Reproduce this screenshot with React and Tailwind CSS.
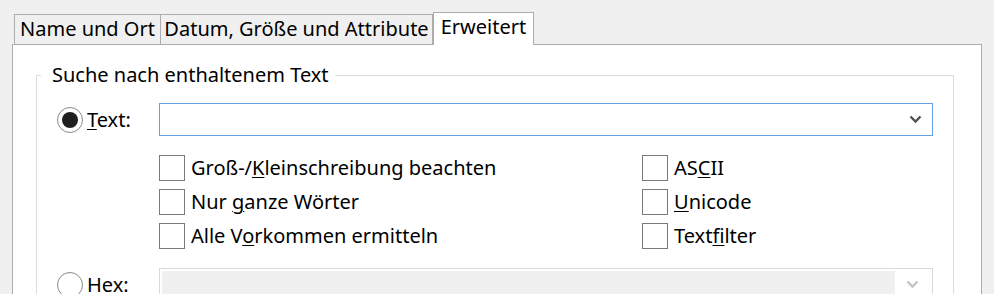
import React from "react";

function Radio({ checked }) {
  return (
    <span className="w-[26px] h-[26px] shrink-0 rounded-full border border-[#8a8a8a] bg-white flex items-center justify-center">
      {checked && <span className="w-[16px] h-[16px] rounded-full bg-[#1f1f1f]" />}
    </span>
  );
}

function Check({ children }) {
  return (
    <div className="flex items-center h-[26px] gap-[6px]">
      <span className="w-[26px] h-[26px] shrink-0 border border-[#7a7a7a] bg-white" />
      <span className="leading-[26px] whitespace-nowrap">{children}</span>
    </div>
  );
}

function U({ children }) {
  return <span className="underline underline-offset-[2px] decoration-1">{children}</span>;
}

function Chevron({ color }) {
  return (
    <svg width="13" height="9" viewBox="0 0 13 9">
      <polyline points="1.5,1.5 6.5,6.5 11.5,1.5" fill="none" stroke={color} strokeWidth="2.4" />
    </svg>
  );
}

export default function App() {
  return (
    <div className="w-[994px] h-[294px] overflow-hidden bg-[#f0f0f0] pt-[12px] px-[12px] flex flex-col font-['Noto_Sans',sans-serif] text-[20px] text-black">
      <div className="flex items-end h-[32px] pl-[2px]">
        <div className="w-[147px] h-[30px] border-t border-l border-r border-[#adadad] bg-[#f0f0f0] flex justify-center">
          <span className="leading-[28px] whitespace-nowrap">Name und Ort</span>
        </div>
        <div className="w-[272px] h-[30px] border-t border-r border-[#adadad] bg-[#f0f0f0] flex justify-center">
          <span className="leading-[28px] whitespace-nowrap">Datum, Größe und Attribute</span>
        </div>
        <div className="relative z-10 w-[101px] h-[33px] -mb-px border-t border-l border-r border-[#adadad] bg-white flex justify-center">
          <span className="leading-[28px] whitespace-nowrap">Erweitert</span>
        </div>
      </div>
      <div className="w-[970px] flex-1 bg-white border border-[#adadad] pl-[23px] pr-[27px] pt-[17px]">
        <fieldset className="border border-[#dcdcdc] pl-[20px] pr-[20px] pt-[15px] pb-[20px]">
          <legend className="-ml-[16px] pl-[11px] pr-[6px] leading-[26px] whitespace-nowrap">
            Suche nach enthaltenem Text
          </legend>
          <div className="flex items-center h-[33px]">
            <div className="w-[102px] shrink-0 flex items-center gap-[4px]">
              <Radio checked />
              <span className="leading-[26px]">
                <U>T</U>ext:
              </span>
            </div>
            <div className="flex-1 h-[33px] border border-[#64a0e1] bg-white flex items-center justify-end pr-[10px]">
              <Chevron color="#505050" />
            </div>
          </div>
          <div className="mt-[19px] pl-[102px] grid grid-cols-[483px_1fr]">
            <div className="flex flex-col gap-[8px]">
              <Check>
                Groß-/<U>K</U>leinschreibung beachten
              </Check>
              <Check>
                Nur <U>g</U>anze Wörter
              </Check>
              <Check>
                Alle V<U>o</U>rkommen ermitteln
              </Check>
            </div>
            <div className="flex flex-col gap-[8px]">
              <Check>
                AS<U>C</U>II
              </Check>
              <Check>
                <U>U</U>nicode
              </Check>
              <Check>
                Text<U>f</U>ilter
              </Check>
            </div>
          </div>
          <div className="mt-[19px] flex items-center h-[33px]">
            <div className="w-[102px] shrink-0 flex items-center gap-[4px]">
              <Radio />
              <span className="leading-[26px]">
                <U>H</U>ex:
              </span>
            </div>
            <div className="flex-1 h-[33px] border border-[#d9d9d9] bg-white p-[2px] flex">
              <div className="flex-1 bg-[#f0f0f0]" />
              <div className="w-[35px] flex items-center justify-center">
                <Chevron color="#c4c4c4" />
              </div>
            </div>
          </div>
        </fieldset>
      </div>
    </div>
  );
}
